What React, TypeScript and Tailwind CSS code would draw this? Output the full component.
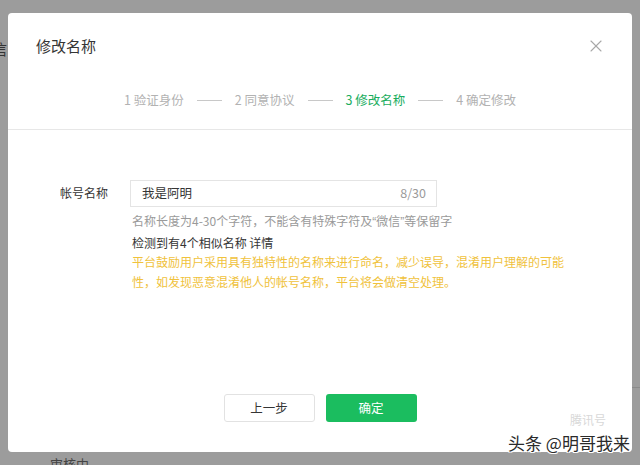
import { X } from "lucide-react";

const FONT = "font-['Microsoft_YaHei','Noto_Sans_CJK_SC','Noto_Sans',sans-serif]";

const STEPS = ["验证身份", "同意协议", "修改名称", "确定修改"];
const ACTIVE = 2;

function StepBar() {
	return (
		<div className="flex items-center justify-center gap-[13px] text-[12.5px] leading-5">
			{STEPS.map((title, index) => (
				<div className="flex items-center gap-[13px]" key={title}>
					{index > 0 && <div className="h-px w-[25px] bg-[#c8c8c8]" />}
					<span className={index === ACTIVE ? "text-[#1aad5e]" : "text-[#b2b2b2]"}>
						{index + 1} {title}
					</span>
				</div>
			))}
		</div>
	);
}

function NameField() {
	return (
		<div className="flex items-start pl-[52px] pt-[50px]">
			<div className="w-[70px] pt-[3px] text-[12px] leading-5 text-[#353535]">帐号名称</div>
			<div className="flex flex-col">
				<div className="flex h-[27px] w-[307px] items-center justify-between border border-[#e4e4e4] pl-[11px] pr-[10px] text-[12.5px] text-[#353535]">
					<span>我是阿明</span>
					<span className="text-[#9a9a9a]">8/30</span>
				</div>
				<div className="mt-[4px] w-[442px] pl-[2px] text-[12px] leading-[19.5px]">
					<p className="text-[#9a9a9a]">
						名称长度为4-30个字符，不能含有特殊字符及
						<span className="font-['Liberation_Sans',sans-serif]">“</span>微信
						<span className="font-['Liberation_Sans',sans-serif]">”</span>等保留字
					</p>
					<p className="text-[#353535]">检测到有4个相似名称 详情</p>
					<p className="text-[#f0c23c]">
						平台鼓励用户采用具有独特性的名称来进行命名，减少误导，混淆用户理解的可能性，如发现恶意混淆他人的帐号名称，平台将会做清空处理。
					</p>
				</div>
			</div>
		</div>
	);
}

function Footer() {
	return (
		<div className="flex justify-center gap-[11px] pb-[30px]">
			<button className="h-[28px] w-[91px] rounded-[3px] border border-[#e2e2e2] bg-white text-[12.5px] text-[#353535]">
				上一步
			</button>
			<button className="h-[28px] w-[91px] rounded-[3px] bg-[#1bbd5f] text-[12.5px] text-white">确定</button>
		</div>
	);
}

export default function App() {
	return (
		<div className={`relative h-[465px] w-[640px] overflow-hidden bg-[#9c9c9c] ${FONT}`}>
			<span className="absolute left-[-8px] top-[38px] text-[15px] text-[#333]">信</span>
			<span className="absolute left-[50px] top-[454px] text-[13px] text-[#444]">审核中</span>
			<div className="absolute right-0 top-[387px] h-px w-[8px] bg-[#8a8a8a]" />
			<div className="pl-[8px] pt-[13px]">
				<div className="flex h-[439px] w-[624px] flex-col rounded-[4px] bg-white">
					<div className="border-b border-[#e7e7e7] pb-[19px]">
						<div className="flex items-center justify-between pl-[28px] pr-[26px] pt-[23px]">
							<h1 className="text-[15px] leading-5 text-[#353535]">修改名称</h1>
							<X className="h-[20px] w-[20px] text-[#a8a8a8]" strokeWidth={1.3} />
						</div>
						<div className="mt-[34px]">
							<StepBar />
						</div>
					</div>
					<div className="flex-1">
						<NameField />
					</div>
					<Footer />
				</div>
			</div>
			<div className="absolute left-[570px] top-[412px] text-[12px] leading-4 text-[#d8d8d8]">腾讯号</div>
			<div className="absolute left-[508px] top-[431px] text-[17px] leading-6 text-[#2a2a2a] [text-shadow:1px_1px_0_#fff,-1px_-1px_0_#fff,1px_-1px_0_#fff,-1px_1px_0_#fff]">
				头条 @明哥我来
			</div>
		</div>
	);
}
